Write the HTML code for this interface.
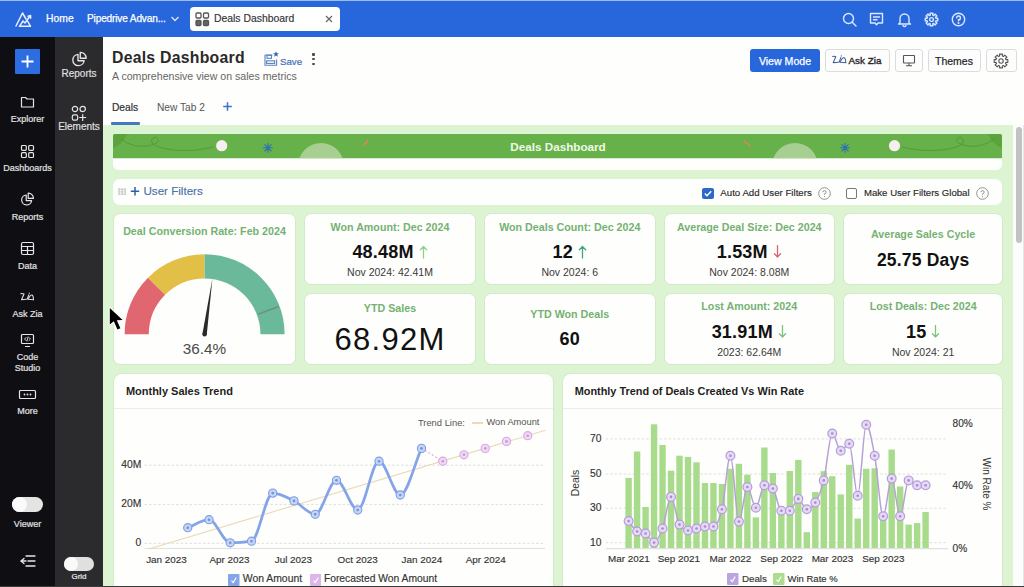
<!DOCTYPE html><html><head><meta charset="utf-8"><style>html,body{margin:0;padding:0;width:1024px;height:587px;overflow:hidden;position:relative;font-family:"Liberation Sans",sans-serif;}</style></head><body><div style="position:absolute;left:0px;top:0px;width:1024px;height:587px;background:#fefefc;"></div><div style="position:absolute;left:0px;top:0px;width:1024px;height:37px;background:#2866dc;"></div><div style="position:absolute;left:0px;top:0px;width:1024px;height:1px;background:#9dbdf2;"></div><div style="position:absolute;left:0px;top:37px;width:55px;height:550px;background:#0f0f13;"></div><div style="position:absolute;left:55px;top:37px;width:48px;height:550px;background:#2b2b2e;"></div><!--TOPBAR--><svg style="position:absolute;left:12px;top:9px;" width="22" height="20" viewBox="0 0 22 20"><g fill="none" stroke="#e8f0ff" stroke-width="1.5" stroke-linejoin="round" stroke-linecap="round"><path d="M4 17 L10.5 4 L14 10"/><path d="M7.5 17.3 L18.5 17.3 L15.5 12"/><path d="M7.5 17.3 L11 12 L13 14 L18 7"/><path d="M16 7.2 L18.6 6.6 L18.6 9.2"/></g></svg><div style="position:absolute;top:13.78px;font-size:10.3px;line-height:10.3px;color:#ffffff;font-weight:normal;white-space:nowrap;letter-spacing:0.1px;left:46px;-webkit-text-stroke:0.25px #fff;">Home</div><div style="position:absolute;top:13.95px;font-size:10.1px;line-height:10.1px;color:#ffffff;font-weight:normal;white-space:nowrap;letter-spacing:-0.15px;left:87px;-webkit-text-stroke:0.25px #fff;">Pipedrive Advan...</div><svg style="position:absolute;left:170px;top:15px;" width="10" height="8" viewBox="0 0 10 8"><path d="M1.5 2 L5 5.5 L8.5 2" fill="none" stroke="#dfe9fb" stroke-width="1.3"/></svg><div style="position:absolute;left:190px;top:7px;width:150px;height:24px;background:#ffffff;border-radius:4px;"></div><svg style="position:absolute;left:195px;top:12px;" width="15" height="15" viewBox="0 0 15 15"><g stroke="#555" stroke-width="1.3"><rect x="1" y="1" width="5" height="5" rx="1" fill="none"/><rect x="8.5" y="1" width="5" height="5" rx="1" fill="none"/><rect x="1" y="8.5" width="5" height="5" rx="1" fill="#666"/><rect x="8.5" y="8.5" width="5" height="5" rx="1" fill="#666"/></g></svg><div style="position:absolute;top:13.80px;font-size:10.4px;line-height:10.4px;color:#333;font-weight:normal;white-space:nowrap;left:214px;-webkit-text-stroke:0.15px #333;">Deals Dashboard</div><svg style="position:absolute;left:324px;top:14px;" width="10" height="10" viewBox="0 0 10 10"><path d="M2 2 L8 8 M8 2 L2 8" stroke="#666" stroke-width="1.2"/></svg><svg style="position:absolute;left:841px;top:11px;" width="17" height="17" viewBox="0 0 17 17"><g fill="none" stroke="#dce8fb" stroke-width="1.4" stroke-linecap="round" stroke-linejoin="round"><circle cx="7.5" cy="7.5" r="5"/><path d="M11.2 11.2 L15 15"/></g></svg><svg style="position:absolute;left:868px;top:11px;" width="17" height="16" viewBox="0 0 17 16"><g fill="none" stroke="#dce8fb" stroke-width="1.4" stroke-linecap="round" stroke-linejoin="round"><path d="M2.5 2.5 H14.5 V12 H10 L8.5 13.8 L7 12 H2.5 Z"/><path d="M5.5 6 H11.5 M5.5 8.8 H9"/></g></svg><svg style="position:absolute;left:896px;top:11px;" width="17" height="17" viewBox="0 0 17 17"><g fill="none" stroke="#dce8fb" stroke-width="1.4" stroke-linecap="round" stroke-linejoin="round"><path d="M4 12 V7.5 A4.5 4.5 0 0 1 13 7.5 V12 L14.5 13 H2.5 Z"/><path d="M7 14.5 A1.6 1.6 0 0 0 10 14.5"/></g></svg><svg style="position:absolute;left:923px;top:11px;" width="17" height="17" viewBox="0 0 17 17"><g fill="none" stroke="#dce8fb" stroke-width="1.4" stroke-linecap="round" stroke-linejoin="round"><path d="M7.27 4.07 L7.13 2.25 L9.87 2.25 L9.73 4.07 L10.77 4.50 L11.95 3.11 L13.89 5.05 L12.50 6.23 L12.93 7.27 L14.75 7.13 L14.75 9.87 L12.93 9.73 L12.50 10.77 L13.89 11.95 L11.95 13.89 L10.77 12.50 L9.73 12.93 L9.87 14.75 L7.13 14.75 L7.27 12.93 L6.23 12.50 L5.05 13.89 L3.11 11.95 L4.50 10.77 L4.07 9.73 L2.25 9.87 L2.25 7.13 L4.07 7.27 L4.50 6.23 L3.11 5.05 L5.05 3.11 L6.23 4.50 Z"/><circle cx="8.5" cy="8.5" r="1.9"/></g></svg><svg style="position:absolute;left:950px;top:11px;" width="17" height="17" viewBox="0 0 17 17"><g fill="none" stroke="#dce8fb" stroke-width="1.4" stroke-linecap="round" stroke-linejoin="round"><circle cx="8.5" cy="8.5" r="6.2"/><path d="M6.6 6.8 A1.9 1.9 0 1 1 8.5 8.8 V9.8" /><circle cx="8.5" cy="12" r="0.4" fill="#dce8fb"/></g></svg><div style="position:absolute;left:15px;top:49px;width:25px;height:25px;background:#2d6de2;border-radius:1px;"></div><svg style="position:absolute;left:15px;top:49px;" width="25" height="25" viewBox="0 0 25 25"><path d="M12.5 6.5 V18.5 M6.5 12.5 H18.5" stroke="#fff" stroke-width="1.8"/></svg><svg style="position:absolute;left:20px;top:95px;" width="15" height="14" viewBox="0 0 15 14"><g fill="none" stroke="#e6e6e6" stroke-width="1.2" stroke-linejoin="round" stroke-linecap="round"><path d="M1.5 2.5 H5.5 L7 4 H13.5 V12 H1.5 Z"/></g></svg><div style="position:absolute;top:115.38px;font-size:9px;line-height:9px;color:#e2e2e2;font-weight:normal;white-space:nowrap;left:-272.5px;width:600px;text-align:center;-webkit-text-stroke:0.2px #e2e2e2;">Explorer</div><svg style="position:absolute;left:20px;top:144px;" width="15" height="15" viewBox="0 0 15 15"><g fill="none" stroke="#e6e6e6" stroke-width="1.2" stroke-linejoin="round" stroke-linecap="round"><rect x="1.5" y="1.5" width="4.8" height="4.8" rx="1"/><rect x="8.7" y="1.5" width="4.8" height="4.8" rx="1"/><rect x="1.5" y="8.7" width="4.8" height="4.8" rx="1"/><rect x="8.7" y="8.7" width="4.8" height="4.8" rx="1"/></g></svg><div style="position:absolute;top:164.38px;font-size:9px;line-height:9px;color:#e2e2e2;font-weight:normal;white-space:nowrap;left:-272.5px;width:600px;text-align:center;-webkit-text-stroke:0.2px #e2e2e2;">Dashboards</div><svg style="position:absolute;left:20px;top:192px;" width="15" height="15" viewBox="0 0 15 15"><g fill="none" stroke="#e6e6e6" stroke-width="1.2" stroke-linejoin="round" stroke-linecap="round"><path d="M6.2 3 A5 5 0 1 0 11.6 8.6 H6.2 Z"/><path d="M8.2 1.2 A5 5 0 0 1 13.4 6.4 H8.2 Z"/></g></svg><div style="position:absolute;top:212.98px;font-size:9px;line-height:9px;color:#e2e2e2;font-weight:normal;white-space:nowrap;left:-272.5px;width:600px;text-align:center;-webkit-text-stroke:0.2px #e2e2e2;">Reports</div><svg style="position:absolute;left:20px;top:241px;" width="15" height="15" viewBox="0 0 15 15"><g fill="none" stroke="#e6e6e6" stroke-width="1.2" stroke-linejoin="round" stroke-linecap="round"><rect x="1.5" y="1.5" width="12" height="12" rx="1.5"/><path d="M1.5 5.5 H13.5 M1.5 9.5 H13.5 M7.5 5.5 V13.5"/></g></svg><div style="position:absolute;top:261.88px;font-size:9px;line-height:9px;color:#e2e2e2;font-weight:normal;white-space:nowrap;left:-272.5px;width:600px;text-align:center;-webkit-text-stroke:0.2px #e2e2e2;">Data</div><svg style="position:absolute;left:18px;top:291px;" width="19" height="11" viewBox="0 0 19 11"><g fill="none" stroke="#dcdcdc" stroke-width="1.15" stroke-linejoin="round" stroke-linecap="round"><path d="M3 2.6 Q5 2.4 6 3 L3.6 8.6 Q6.5 8.6 9.4 8 L10.8 3.9"/><path d="M10.2 8.2 Q12.2 3.6 13.9 4 Q15.4 4.6 15.5 8.8 Q12.8 8.6 10.2 8.2"/></g><circle cx="11.3" cy="2.2" r="0.6" fill="#dcdcdc"/></svg><div style="position:absolute;top:310.38px;font-size:9px;line-height:9px;color:#e2e2e2;font-weight:normal;white-space:nowrap;left:-272.5px;width:600px;text-align:center;-webkit-text-stroke:0.2px #e2e2e2;">Ask Zia</div><svg style="position:absolute;left:20px;top:333px;" width="15" height="15" viewBox="0 0 15 15"><g fill="none" stroke="#e6e6e6" stroke-width="1.2" stroke-linejoin="round" stroke-linecap="round"><rect x="1.5" y="1.5" width="12" height="9" rx="1"/><path d="M5.5 13.5 H9.5"/><path d="M6 4.5 L4.5 6 L6 7.5 M9 4.5 L10.5 6 L9 7.5 M8 4 L7 8" stroke-width="0.9"/></g></svg><div style="position:absolute;top:353.38px;font-size:9px;line-height:9px;color:#e2e2e2;font-weight:normal;white-space:nowrap;left:-272.5px;width:600px;text-align:center;-webkit-text-stroke:0.2px #e2e2e2;">Code</div><div style="position:absolute;top:364.38px;font-size:9px;line-height:9px;color:#e2e2e2;font-weight:normal;white-space:nowrap;left:-272.5px;width:600px;text-align:center;-webkit-text-stroke:0.2px #e2e2e2;">Studio</div><svg style="position:absolute;left:18px;top:389px;" width="19" height="11" viewBox="0 0 19 11"><g fill="none" stroke="#e6e6e6" stroke-width="1.2" stroke-linejoin="round" stroke-linecap="round"><rect x="1.5" y="1.5" width="16" height="8" rx="1"/></g><g fill="#e6e6e6"><circle cx="6.5" cy="5.5" r="0.9"/><circle cx="9.5" cy="5.5" r="0.9"/><circle cx="12.5" cy="5.5" r="0.9"/></g></svg><div style="position:absolute;top:407.38px;font-size:9px;line-height:9px;color:#e2e2e2;font-weight:normal;white-space:nowrap;left:-272.5px;width:600px;text-align:center;-webkit-text-stroke:0.2px #e2e2e2;">More</div><div style="position:absolute;left:12px;top:497px;width:31px;height:15px;background:#e4e4e2;border-radius:8px;"></div><div style="position:absolute;left:12px;top:497px;width:15px;height:15px;border-radius:50%;background:#fafafa;"></div><div style="position:absolute;top:519.88px;font-size:9px;line-height:9px;color:#e2e2e2;font-weight:normal;white-space:nowrap;left:-272.5px;width:600px;text-align:center;-webkit-text-stroke:0.2px #e2e2e2;">Viewer</div><svg style="position:absolute;left:19px;top:554px;" width="18" height="14" viewBox="0 0 18 14"><g fill="none" stroke="#e6e6e6" stroke-width="1.3" stroke-linecap="round"><path d="M7 2 H16 M9 7 H16 M7 12 H16 M5 4.5 L2 7 L5 9.5 M2 7 H7"/></g></svg><svg style="position:absolute;left:70.5px;top:50.5px;" width="17" height="17" viewBox="0 0 17 17"><g fill="none" stroke="#e6e6e6" stroke-width="1.2" stroke-linejoin="round" stroke-linecap="round" transform="scale(1.13)"><path d="M6.2 3 A5 5 0 1 0 11.6 8.6 H6.2 Z"/><path d="M8.2 1.2 A5 5 0 0 1 13.4 6.4 H8.2 Z"/></g></svg><div style="position:absolute;top:69.03px;font-size:10px;line-height:10px;color:#e2e2e2;font-weight:normal;white-space:nowrap;left:-221px;width:600px;text-align:center;-webkit-text-stroke:0.15px #e2e2e2;">Reports</div><svg style="position:absolute;left:71px;top:104.5px;" width="16" height="17" viewBox="0 0 16 17"><g fill="none" stroke="#e6e6e6" stroke-width="1.2" stroke-linejoin="round" stroke-linecap="round"><circle cx="4" cy="4" r="2.7"/><circle cx="11.7" cy="4" r="2.7"/><rect x="1.3" y="9.8" width="5.4" height="5.4" rx="1.6"/><path d="M11.7 9.5 V15.5 M8.7 12.5 H14.7"/></g></svg><div style="position:absolute;top:122.23px;font-size:10px;line-height:10px;color:#e2e2e2;font-weight:normal;white-space:nowrap;left:-221px;width:600px;text-align:center;-webkit-text-stroke:0.15px #e2e2e2;">Elements</div><div style="position:absolute;left:64px;top:557px;width:30px;height:14px;background:#e0e0de;border-radius:7px;"></div><div style="position:absolute;left:64px;top:557px;width:14px;height:14px;border-radius:50%;background:#fafafa;"></div><div style="position:absolute;top:573.23px;font-size:8px;line-height:8px;color:#e2e2e2;font-weight:normal;white-space:nowrap;left:-221px;width:600px;text-align:center;-webkit-text-stroke:0.2px #ececec;">Grid</div><div style="position:absolute;top:50.23px;font-size:15.8px;line-height:15.8px;color:#2a2a2a;font-weight:bold;white-space:nowrap;letter-spacing:0.25px;left:112px;">Deals Dashboard</div><div style="position:absolute;top:71.43px;font-size:10.6px;line-height:10.6px;color:#666;font-weight:normal;white-space:nowrap;left:112px;">A comprehensive view on sales metrics</div><svg style="position:absolute;left:262px;top:50px;" width="18" height="18" viewBox="0 0 18 18"><g fill="none" stroke="#5a82c0" stroke-width="1.1"><path d="M3 5 H10.5 M3 5 V15.3 H14.6 V9.5"/><rect x="5" y="5.3" width="4.5" height="3"/><rect x="4.6" y="10.8" width="8" height="2.6"/></g><path d="M14 1.2 L14.8 3.3 L17 3.3 L15.3 4.6 L15.9 6.8 L14 5.5 L12.1 6.8 L12.7 4.6 L11 3.3 L13.2 3.3 Z" fill="#2f62b8"/></svg><div style="position:absolute;top:56.59px;font-size:9.7px;line-height:9.7px;color:#4270b8;font-weight:normal;white-space:nowrap;left:280px;-webkit-text-stroke:0.2px #4270b8;">Save</div><div style="position:absolute;left:312.4px;top:53.4px;width:3px;height:12px;"><div style="position:absolute;left:0;top:0;width:2.2px;height:2.2px;border-radius:50%;background:#4a4a4a"></div><div style="position:absolute;left:0;top:4.6px;width:2.2px;height:2.2px;border-radius:50%;background:#4a4a4a"></div><div style="position:absolute;left:0;top:9.2px;width:2.2px;height:2.2px;border-radius:50%;background:#4a4a4a"></div></div><div style="position:absolute;top:102.87px;font-size:10.2px;line-height:10.2px;color:#333;font-weight:normal;white-space:nowrap;left:112px;-webkit-text-stroke:0.2px #333;">Deals</div><div style="position:absolute;top:102.87px;font-size:10.2px;line-height:10.2px;color:#555;font-weight:normal;white-space:nowrap;left:157px;">New Tab 2</div><svg style="position:absolute;left:221px;top:99.5px;" width="13" height="13" viewBox="0 0 13 13"><path d="M6.5 2.2 V10.8 M2.2 6.5 H10.8" stroke="#3a70c8" stroke-width="1.5"/></svg><div style="position:absolute;left:111px;top:122.3px;width:28.5px;height:2.7px;background:#4479c2;border-radius:1px;"></div><div style="position:absolute;left:750px;top:49px;width:70px;height:23px;background:#2866dc;border-radius:3px;"></div><div style="position:absolute;top:55.53px;font-size:10.6px;line-height:10.6px;color:#ffffff;font-weight:normal;white-space:nowrap;left:485px;width:600px;text-align:center;-webkit-text-stroke:0.25px #fff;">View Mode</div><div style="position:absolute;left:824.5px;top:49px;width:65px;height:23px;background:#fdfdfd;border:1px solid #dcdcdc;box-sizing:border-box;border-radius:3px;"></div><svg style="position:absolute;left:831px;top:54px;" width="17" height="12" viewBox="0 0 17 12"><g fill="none" stroke="#3d5f96" stroke-width="1.05" stroke-linejoin="round" stroke-linecap="round"><path d="M1.6 2.4 Q3.8 2.2 4.8 2.8 L2.2 8.6 Q5.3 8.6 8.3 8 L9.8 3.6"/><path d="M9.2 8.2 Q11.3 3.4 13.1 3.8 Q14.7 4.4 14.8 8.8 Q12 8.6 9.2 8.2"/></g><circle cx="10.3" cy="1.9" r="0.6" fill="#3d5f96"/></svg><div style="position:absolute;top:56.22px;font-size:9.9px;line-height:9.9px;color:#262626;font-weight:normal;white-space:nowrap;left:848.5px;-webkit-text-stroke:0.35px #262626;">Ask Zia</div><div style="position:absolute;left:894.5px;top:49px;width:28.5px;height:23px;background:#fdfdfd;border:1px solid #dcdcdc;box-sizing:border-box;border-radius:3px;"></div><svg style="position:absolute;left:902px;top:54px;" width="14" height="13" viewBox="0 0 14 13"><g fill="none" stroke="#555" stroke-width="1.1"><rect x="1.5" y="1.5" width="11" height="7.5" rx="0.5"/><path d="M7 9 V11.5 M4 11.8 H10"/></g></svg><div style="position:absolute;left:927.5px;top:49px;width:53px;height:23px;background:#fdfdfd;border:1px solid #dcdcdc;box-sizing:border-box;border-radius:3px;"></div><div style="position:absolute;top:55.71px;font-size:10.5px;line-height:10.5px;color:#222;font-weight:normal;white-space:nowrap;left:654px;width:600px;text-align:center;-webkit-text-stroke:0.2px #222;">Themes</div><div style="position:absolute;left:985.5px;top:49px;width:31px;height:23px;background:#fdfdfd;border:1px solid #dcdcdc;box-sizing:border-box;border-radius:3px;"></div><svg style="position:absolute;left:992px;top:52px;" width="18" height="18" viewBox="0 0 18 18"><g fill="none" stroke="#555" stroke-width="1.1" stroke-linejoin="round"><path d="M7.64 4.08 L7.50 2.16 L10.50 2.16 L10.36 4.08 L11.51 4.56 L12.77 3.10 L14.90 5.23 L13.44 6.49 L13.92 7.64 L15.84 7.50 L15.84 10.50 L13.92 10.36 L13.44 11.51 L14.90 12.77 L12.77 14.90 L11.51 13.44 L10.36 13.92 L10.50 15.84 L7.50 15.84 L7.64 13.92 L6.49 13.44 L5.23 14.90 L3.10 12.77 L4.56 11.51 L4.08 10.36 L2.16 10.50 L2.16 7.50 L4.08 7.64 L4.56 6.49 L3.10 5.23 L5.23 3.10 L6.49 4.56 Z"/><circle cx="9" cy="9" r="2.2"/></g></svg><div style="position:absolute;left:103px;top:125px;width:910px;height:462px;background:#ddf4d3;"></div><div style="position:absolute;left:1013px;top:125px;width:11px;height:462px;background:#fcfcfd;"></div><div style="position:absolute;left:1023px;top:125px;width:1px;height:462px;background:#e6e6ea;"></div><div style="position:absolute;left:1015.5px;top:127px;width:6px;height:115.5px;background:#c2c2c2;border-radius:3px;"></div><div style="position:absolute;left:113px;top:133.5px;width:889px;height:36px;background:#fefefc;border-radius:2px 2px 6px 6px;"></div><svg style="position:absolute;left:113px;top:133.5px;border-radius:2px 2px 6px 6px;" width="889" height="36" viewBox="0 0 889 36"><rect x="0" y="0" width="889" height="24.5" fill="#66b149"/><path d="M0 0 H14 Q10 10 0 14 Z" fill="#5aa03f" opacity="0.8"/><path d="M889 0 H875 Q879 10 889 14 Z" fill="#5aa03f" opacity="0.8"/><path d="M8 5 Q20 14 34 12 Q47 10 45 5 Q42 1 38.5 6 Q37 13 60 16 Q80 18 100 13" fill="none" stroke="#4f9639" stroke-width="0.8"/><path d="M881 5 Q869 14 855 12 Q842 10 844 5 Q847 1 850.5 6 Q852 13 829 16 Q809 18 789 13" fill="none" stroke="#4f9639" stroke-width="0.8"/><circle cx="208" cy="32" r="23" fill="#a6cf91"/><circle cx="682" cy="32" r="23" fill="#a6cf91"/><circle cx="108.7" cy="11.7" r="5.6" fill="#f7eef0"/><circle cx="781.5" cy="11.7" r="5.6" fill="#f7eef0"/><g stroke="#2f74b0" stroke-width="1.1" stroke-linecap="round"><path d="M154.9 9.3 V18.3 M150.4 13.8 H159.4 M151.7 10.6 L158.1 17 M158.1 10.6 L151.7 17"/><path d="M732 9.3 V18.3 M727.5 13.8 H736.5 M728.8 10.6 L735.2 17 M735.2 10.6 L728.8 17"/></g><circle cx="154.9" cy="13.8" r="1.8" fill="#2f74b0"/><circle cx="732" cy="13.8" r="1.8" fill="#2f74b0"/><path d="M250 12 Q253 10 254 8 M251 11 L255 6" stroke="#d88a4a" stroke-width="1.4" fill="none" stroke-linecap="round"/><path d="M631 7 Q634 9 637 12 M632 8 L636 11" stroke="#d88a4a" stroke-width="1.4" fill="none" stroke-linecap="round"/><rect x="0" y="24.5" width="889" height="12" fill="#fefefc"/></svg><div style="position:absolute;top:141.30px;font-size:11.7px;line-height:11.7px;color:#eef9e6;font-weight:bold;white-space:nowrap;left:258px;width:600px;text-align:center;">Deals Dashboard</div><div style="position:absolute;left:113px;top:179px;width:889px;height:26px;background:#fefefc;border-radius:7px;"></div><svg style="position:absolute;left:118px;top:187px;" width="9" height="9" viewBox="0 0 9 9"><g fill="#c8c8c8"><rect x="0.5" y="1" width="1.2" height="7"/><rect x="3.5" y="1" width="1.2" height="7"/><rect x="6.5" y="1" width="1.2" height="7"/><rect x="0" y="2.2" width="8" height="0.8"/><rect x="0" y="4.5" width="8" height="0.8"/><rect x="0" y="6.8" width="8" height="0.8"/></g></svg><svg style="position:absolute;left:130px;top:186px;" width="10" height="10" viewBox="0 0 10 10"><path d="M5 1 V9.5 M0.8 5.2 H9.2" stroke="#2f5ea8" stroke-width="1.5"/></svg><div style="position:absolute;top:185.18px;font-size:11.6px;line-height:11.6px;color:#4a72ab;font-weight:normal;white-space:nowrap;left:143.5px;-webkit-text-stroke:0.15px #4a72ab;">User Filters</div><div style="position:absolute;left:702px;top:187.5px;width:11.5px;height:11px;background:#2f68c8;border-radius:2px;"></div><svg style="position:absolute;left:702px;top:187.5px;" width="12" height="11" viewBox="0 0 12 11"><path d="M2.8 5.6 L5 7.8 L9.2 3.2" stroke="#fff" stroke-width="1.4" fill="none"/></svg><div style="position:absolute;top:188.09px;font-size:9.7px;line-height:9.7px;color:#2a2a2a;font-weight:normal;white-space:nowrap;left:720.3px;-webkit-text-stroke:0.15px #2a2a2a;">Auto Add User Filters</div><svg style="position:absolute;left:818px;top:186.5px;" width="13" height="13" viewBox="0 0 13 13"><g fill="none" stroke="#888" stroke-width="0.9"><circle cx="6.5" cy="6.5" r="5.8"/><path d="M4.9 5.2 A1.6 1.6 0 1 1 6.5 6.8 V7.8"/></g><circle cx="6.5" cy="9.6" r="0.55" fill="#888"/></svg><div style="position:absolute;left:845.5px;top:187.5px;width:11.5px;height:11px;background:#ffffff;border:1px solid #777;box-sizing:border-box;border-radius:2px;"></div><div style="position:absolute;top:188.17px;font-size:9.6px;line-height:9.6px;color:#2a2a2a;font-weight:normal;white-space:nowrap;left:864px;-webkit-text-stroke:0.15px #2a2a2a;">Make User Filters Global</div><svg style="position:absolute;left:975.5px;top:186.5px;" width="13" height="13" viewBox="0 0 13 13"><g fill="none" stroke="#888" stroke-width="0.9"><circle cx="6.5" cy="6.5" r="5.8"/><path d="M4.9 5.2 A1.6 1.6 0 1 1 6.5 6.8 V7.8"/></g><circle cx="6.5" cy="9.6" r="0.55" fill="#888"/></svg><div style="position:absolute;left:114px;top:214px;width:181px;height:150px;background:#fefefc;border-radius:6px;box-shadow:0 0 0 1px #d3eaca;"></div><div style="position:absolute;left:305px;top:214px;width:170px;height:70px;background:#fefefc;border-radius:6px;box-shadow:0 0 0 1px #d3eaca;"></div><div style="position:absolute;left:305px;top:294px;width:170px;height:70px;background:#fefefc;border-radius:6px;box-shadow:0 0 0 1px #d3eaca;"></div><div style="position:absolute;left:485px;top:214px;width:169.5px;height:70px;background:#fefefc;border-radius:6px;box-shadow:0 0 0 1px #d3eaca;"></div><div style="position:absolute;left:485px;top:294px;width:169.5px;height:70px;background:#fefefc;border-radius:6px;box-shadow:0 0 0 1px #d3eaca;"></div><div style="position:absolute;left:664.5px;top:214px;width:169.5px;height:70px;background:#fefefc;border-radius:6px;box-shadow:0 0 0 1px #d3eaca;"></div><div style="position:absolute;left:664.5px;top:294px;width:169.5px;height:70px;background:#fefefc;border-radius:6px;box-shadow:0 0 0 1px #d3eaca;"></div><div style="position:absolute;left:844px;top:214px;width:158.29999999999995px;height:70px;background:#fefefc;border-radius:6px;box-shadow:0 0 0 1px #d3eaca;"></div><div style="position:absolute;left:844px;top:294px;width:158.29999999999995px;height:70px;background:#fefefc;border-radius:6px;box-shadow:0 0 0 1px #d3eaca;"></div><div style="position:absolute;top:221.94px;font-size:10.7px;line-height:10.7px;color:#74b273;font-weight:bold;white-space:nowrap;left:90.0px;width:600px;text-align:center;">Won Amount: Dec 2024</div><div style="position:absolute;left:90.0px;width:600px;top:243.06px;text-align:center;font-size:18px;line-height:18px;font-weight:bold;color:#111;white-space:nowrap;letter-spacing:0.2px;">48.48M<svg width="9" height="14" viewBox="0 0 9 14" style="margin-left:5px;vertical-align:-1px"><path d="M4.5 1.5 V13 M1.4 4.8 L4.5 1.5 L7.6 4.8" fill="none" stroke="#8fcf8f" stroke-width="1.3" stroke-linecap="round" stroke-linejoin="round"/></svg></div><div style="position:absolute;top:267.11px;font-size:10.5px;line-height:10.5px;color:#3a3a3a;font-weight:normal;white-space:nowrap;left:90.0px;width:600px;text-align:center;">Nov 2024: 42.41M</div><div style="position:absolute;top:221.94px;font-size:10.7px;line-height:10.7px;color:#74b273;font-weight:bold;white-space:nowrap;left:269.75px;width:600px;text-align:center;">Won Deals Count: Dec 2024</div><div style="position:absolute;left:269.75px;width:600px;top:243.06px;text-align:center;font-size:18px;line-height:18px;font-weight:bold;color:#111;white-space:nowrap;letter-spacing:0.2px;">12<svg width="9" height="14" viewBox="0 0 9 14" style="margin-left:5px;vertical-align:-1px"><path d="M4.5 1.5 V13 M1.4 4.8 L4.5 1.5 L7.6 4.8" fill="none" stroke="#3fa68c" stroke-width="1.3" stroke-linecap="round" stroke-linejoin="round"/></svg></div><div style="position:absolute;top:267.11px;font-size:10.5px;line-height:10.5px;color:#3a3a3a;font-weight:normal;white-space:nowrap;left:269.75px;width:600px;text-align:center;">Nov 2024: 6</div><div style="position:absolute;top:221.94px;font-size:10.7px;line-height:10.7px;color:#74b273;font-weight:bold;white-space:nowrap;left:449.25px;width:600px;text-align:center;">Average Deal Size: Dec 2024</div><div style="position:absolute;left:449.25px;width:600px;top:243.06px;text-align:center;font-size:18px;line-height:18px;font-weight:bold;color:#111;white-space:nowrap;letter-spacing:0.2px;">1.53M<svg width="9" height="14" viewBox="0 0 9 14" style="margin-left:5px;vertical-align:-1px"><path d="M4.5 0.5 V12 M1.4 8.7 L4.5 12 L7.6 8.7" fill="none" stroke="#d4687a" stroke-width="1.3" stroke-linecap="round" stroke-linejoin="round"/></svg></div><div style="position:absolute;top:267.11px;font-size:10.5px;line-height:10.5px;color:#3a3a3a;font-weight:normal;white-space:nowrap;left:449.25px;width:600px;text-align:center;">Nov 2024: 8.08M</div><div style="position:absolute;top:229.44px;font-size:10.7px;line-height:10.7px;color:#74b273;font-weight:bold;white-space:nowrap;left:623.15px;width:600px;text-align:center;">Average Sales Cycle</div><div style="position:absolute;top:251.99px;font-size:17.5px;line-height:17.5px;color:#111;font-weight:bold;white-space:nowrap;letter-spacing:0.2px;left:623.15px;width:600px;text-align:center;">25.75 Days</div><div style="position:absolute;top:302.54px;font-size:10.7px;line-height:10.7px;color:#74b273;font-weight:bold;white-space:nowrap;left:90.0px;width:600px;text-align:center;">YTD Sales</div><div style="position:absolute;top:323.76px;font-size:31px;line-height:31px;color:#111;font-weight:normal;white-space:nowrap;letter-spacing:1.3px;left:90.0px;width:600px;text-align:center;">68.92M</div><div style="position:absolute;top:308.94px;font-size:10.7px;line-height:10.7px;color:#74b273;font-weight:bold;white-space:nowrap;left:269.75px;width:600px;text-align:center;">YTD Won Deals</div><div style="position:absolute;top:330.36px;font-size:18px;line-height:18px;color:#111;font-weight:bold;white-space:nowrap;letter-spacing:0.2px;left:269.75px;width:600px;text-align:center;">60</div><div style="position:absolute;top:301.44px;font-size:10.7px;line-height:10.7px;color:#74b273;font-weight:bold;white-space:nowrap;left:449.25px;width:600px;text-align:center;">Lost Amount: 2024</div><div style="position:absolute;left:449.25px;width:600px;top:323.06px;text-align:center;font-size:18px;line-height:18px;font-weight:bold;color:#111;white-space:nowrap;letter-spacing:0.2px;">31.91M<svg width="9" height="14" viewBox="0 0 9 14" style="margin-left:5px;vertical-align:-1px"><path d="M4.5 0.5 V12 M1.4 8.7 L4.5 12 L7.6 8.7" fill="none" stroke="#7fc27f" stroke-width="1.3" stroke-linecap="round" stroke-linejoin="round"/></svg></div><div style="position:absolute;top:347.11px;font-size:10.5px;line-height:10.5px;color:#3a3a3a;font-weight:normal;white-space:nowrap;left:449.25px;width:600px;text-align:center;">2023: 62.64M</div><div style="position:absolute;top:301.44px;font-size:10.7px;line-height:10.7px;color:#74b273;font-weight:bold;white-space:nowrap;left:623.15px;width:600px;text-align:center;">Lost Deals: Dec 2024</div><div style="position:absolute;left:623.15px;width:600px;top:323.06px;text-align:center;font-size:18px;line-height:18px;font-weight:bold;color:#111;white-space:nowrap;letter-spacing:0.2px;">15<svg width="9" height="14" viewBox="0 0 9 14" style="margin-left:5px;vertical-align:-1px"><path d="M4.5 0.5 V12 M1.4 8.7 L4.5 12 L7.6 8.7" fill="none" stroke="#7fc27f" stroke-width="1.3" stroke-linecap="round" stroke-linejoin="round"/></svg></div><div style="position:absolute;top:347.11px;font-size:10.5px;line-height:10.5px;color:#3a3a3a;font-weight:normal;white-space:nowrap;left:623.15px;width:600px;text-align:center;">Nov 2024: 21</div><div style="position:absolute;top:225.84px;font-size:10.7px;line-height:10.7px;color:#74b273;font-weight:bold;white-space:nowrap;left:-95.5px;width:600px;text-align:center;">Deal Conversion Rate: Feb 2024</div><svg style="position:absolute;left:0;top:0" width="1024" height="587" viewBox="0 0 1024 587"><path d="M124.60 334.20 A80 80 0 0 1 148.03 277.63 L165.14 294.74 A55.8 55.8 0 0 0 148.80 334.20 Z" fill="#e0666f"/><path d="M148.03 277.63 A80 80 0 0 1 204.60 254.20 L204.60 278.40 A55.8 55.8 0 0 0 165.14 294.74 Z" fill="#e2bf47"/><path d="M204.60 254.20 A80 80 0 0 1 284.60 334.20 L260.40 334.20 A55.8 55.8 0 0 0 204.60 278.40 Z" fill="#6ab99a"/><path d="M257.80 314.31 L278.60 306.53" stroke="#6f8d7f" stroke-width="1.4"/><path d="M202.42 333.89 L212.46 278.25 L206.78 334.51 Z" fill="#2b2b2b"/><circle cx="204.6" cy="334.2" r="2.2" fill="#2b2b2b"/></svg><div style="position:absolute;top:340.85px;font-size:15.3px;line-height:15.3px;color:#4a4a4a;font-weight:normal;white-space:nowrap;left:-95.5px;width:600px;text-align:center;">36.4%</div><div style="position:absolute;left:113.8px;top:374.2px;width:439.09999999999997px;height:225.8px;background:#fefefc;border-radius:8px;box-shadow:0 0 0 1px #d3eaca;"></div><div style="position:absolute;left:562.8px;top:374.2px;width:439.20000000000005px;height:225.8px;background:#fefefc;border-radius:8px;box-shadow:0 0 0 1px #d3eaca;"></div><div style="position:absolute;left:113.8px;top:407.5px;width:438.9px;height:1px;background:#ececea;"></div><div style="position:absolute;left:562.8px;top:407.5px;width:439.2px;height:1px;background:#ececea;"></div><div style="position:absolute;top:385.79px;font-size:11px;line-height:11px;color:#1e1e1e;font-weight:bold;white-space:nowrap;left:125.9px;">Monthly Sales Trend</div><div style="position:absolute;top:386.07px;font-size:10.9px;line-height:10.9px;color:#1e1e1e;font-weight:bold;white-space:nowrap;left:574.7px;">Monthly Trend of Deals Created Vs Win Rate</div><svg style="position:absolute;left:0;top:0" width="1024" height="587" viewBox="0 0 1024 587"><path d="M144.6 465.2 H545" stroke="#dedede" stroke-width="1" stroke-dasharray="2.5 2"/><path d="M144.6 504.4 H545" stroke="#dedede" stroke-width="1" stroke-dasharray="2.5 2"/><path d="M144.6 543.3 H545" stroke="#dedede" stroke-width="1" stroke-dasharray="2.5 2"/><path d="M144.6 548.5 H545" stroke="#e0e0e0" stroke-width="1.2"/><path d="M148.8 549 L545.4 430.3" stroke="#ead9b6" stroke-width="1.1"/><path d="M472 423 H483" stroke="#e2c892" stroke-width="1.3"/><path d="M421.5 448.4 L442.75 461.2" stroke="#dcb3e6" stroke-width="1.2" stroke-dasharray="2 2"/><path d="M187.75 527.70 C194.83 525.03 201.92 519.70 209.00 519.70 C216.08 519.70 223.17 542.80 230.25 542.80 C237.33 542.80 244.42 542.27 251.50 541.20 C258.58 540.13 265.67 493.10 272.75 493.10 C279.83 493.10 286.92 497.37 294.00 500.90 C301.08 504.43 308.17 514.30 315.25 514.30 C322.33 514.30 329.42 480.30 336.50 480.30 C343.58 480.30 350.67 510.00 357.75 510.00 C364.83 510.00 371.92 461.20 379.00 461.20 C386.08 461.20 393.17 495.00 400.25 495.00 C407.33 495.00 414.42 463.93 421.50 448.40" fill="none" stroke="#85a3e9" stroke-width="2.7"/><circle cx="187.75" cy="527.7" r="4.1" fill="#c7d5f5" stroke="#7d9ee6" stroke-width="1.1"/><circle cx="187.75" cy="527.7" r="1.3" fill="#6f90dd"/><circle cx="209.0" cy="519.7" r="4.1" fill="#c7d5f5" stroke="#7d9ee6" stroke-width="1.1"/><circle cx="209.0" cy="519.7" r="1.3" fill="#6f90dd"/><circle cx="230.25" cy="542.8" r="4.1" fill="#c7d5f5" stroke="#7d9ee6" stroke-width="1.1"/><circle cx="230.25" cy="542.8" r="1.3" fill="#6f90dd"/><circle cx="251.5" cy="541.2" r="4.1" fill="#c7d5f5" stroke="#7d9ee6" stroke-width="1.1"/><circle cx="251.5" cy="541.2" r="1.3" fill="#6f90dd"/><circle cx="272.75" cy="493.1" r="4.1" fill="#c7d5f5" stroke="#7d9ee6" stroke-width="1.1"/><circle cx="272.75" cy="493.1" r="1.3" fill="#6f90dd"/><circle cx="294.0" cy="500.9" r="4.1" fill="#c7d5f5" stroke="#7d9ee6" stroke-width="1.1"/><circle cx="294.0" cy="500.9" r="1.3" fill="#6f90dd"/><circle cx="315.25" cy="514.3" r="4.1" fill="#c7d5f5" stroke="#7d9ee6" stroke-width="1.1"/><circle cx="315.25" cy="514.3" r="1.3" fill="#6f90dd"/><circle cx="336.5" cy="480.3" r="4.1" fill="#c7d5f5" stroke="#7d9ee6" stroke-width="1.1"/><circle cx="336.5" cy="480.3" r="1.3" fill="#6f90dd"/><circle cx="357.75" cy="510" r="4.1" fill="#c7d5f5" stroke="#7d9ee6" stroke-width="1.1"/><circle cx="357.75" cy="510" r="1.3" fill="#6f90dd"/><circle cx="379.0" cy="461.2" r="4.1" fill="#c7d5f5" stroke="#7d9ee6" stroke-width="1.1"/><circle cx="379.0" cy="461.2" r="1.3" fill="#6f90dd"/><circle cx="400.25" cy="495" r="4.1" fill="#c7d5f5" stroke="#7d9ee6" stroke-width="1.1"/><circle cx="400.25" cy="495" r="1.3" fill="#6f90dd"/><circle cx="421.5" cy="448.4" r="4.1" fill="#c7d5f5" stroke="#7d9ee6" stroke-width="1.1"/><circle cx="421.5" cy="448.4" r="1.3" fill="#6f90dd"/><circle cx="442.75" cy="461.2" r="4.1" fill="#efd9f3" stroke="#d8a9e4" stroke-width="1.1"/><circle cx="442.75" cy="461.2" r="1.3" fill="#cf94de"/><circle cx="464.0" cy="454.8" r="4.1" fill="#efd9f3" stroke="#d8a9e4" stroke-width="1.1"/><circle cx="464.0" cy="454.8" r="1.3" fill="#cf94de"/><circle cx="485.25" cy="448.4" r="4.1" fill="#efd9f3" stroke="#d8a9e4" stroke-width="1.1"/><circle cx="485.25" cy="448.4" r="1.3" fill="#cf94de"/><circle cx="506.5" cy="441.4" r="4.1" fill="#efd9f3" stroke="#d8a9e4" stroke-width="1.1"/><circle cx="506.5" cy="441.4" r="1.3" fill="#cf94de"/><circle cx="527.75" cy="435.7" r="4.1" fill="#efd9f3" stroke="#d8a9e4" stroke-width="1.1"/><circle cx="527.75" cy="435.7" r="1.3" fill="#cf94de"/><path d="M605.7 438.9 H946.2" stroke="#dedede" stroke-width="1" stroke-dasharray="2.5 2"/><path d="M605.7 474 H946.2" stroke="#dedede" stroke-width="1" stroke-dasharray="2.5 2"/><path d="M605.7 508.3 H946.2" stroke="#dedede" stroke-width="1" stroke-dasharray="2.5 2"/><path d="M605.7 542.7 H946.2" stroke="#dedede" stroke-width="1" stroke-dasharray="2.5 2"/><rect x="625.40" y="477.9" width="6.4" height="70.40" fill="#a9db8c"/><rect x="633.89" y="451.5" width="6.4" height="96.80" fill="#a9db8c"/><rect x="642.37" y="507" width="6.4" height="41.30" fill="#a9db8c"/><rect x="650.86" y="424.3" width="6.4" height="124.00" fill="#a9db8c"/><rect x="659.34" y="445" width="6.4" height="103.30" fill="#a9db8c"/><rect x="667.83" y="470.7" width="6.4" height="77.60" fill="#a9db8c"/><rect x="676.32" y="455.7" width="6.4" height="92.60" fill="#a9db8c"/><rect x="684.80" y="456.9" width="6.4" height="91.40" fill="#a9db8c"/><rect x="693.29" y="462.3" width="6.4" height="86.00" fill="#a9db8c"/><rect x="701.77" y="483" width="6.4" height="65.30" fill="#a9db8c"/><rect x="710.26" y="483" width="6.4" height="65.30" fill="#a9db8c"/><rect x="718.75" y="484" width="6.4" height="64.30" fill="#a9db8c"/><rect x="727.23" y="468.8" width="6.4" height="79.50" fill="#a9db8c"/><rect x="735.72" y="463.8" width="6.4" height="84.50" fill="#a9db8c"/><rect x="744.20" y="474.7" width="6.4" height="73.60" fill="#a9db8c"/><rect x="752.69" y="517.4" width="6.4" height="30.90" fill="#a9db8c"/><rect x="761.18" y="447.5" width="6.4" height="100.80" fill="#a9db8c"/><rect x="769.66" y="473" width="6.4" height="75.30" fill="#a9db8c"/><rect x="778.15" y="508" width="6.4" height="40.30" fill="#a9db8c"/><rect x="786.63" y="471" width="6.4" height="77.30" fill="#a9db8c"/><rect x="795.12" y="459.9" width="6.4" height="88.40" fill="#a9db8c"/><rect x="803.61" y="532.2" width="6.4" height="16.10" fill="#a9db8c"/><rect x="812.09" y="492" width="6.4" height="56.30" fill="#a9db8c"/><rect x="820.58" y="471.2" width="6.4" height="77.10" fill="#a9db8c"/><rect x="829.06" y="476.2" width="6.4" height="72.10" fill="#a9db8c"/><rect x="837.55" y="494.4" width="6.4" height="53.90" fill="#a9db8c"/><rect x="846.04" y="464.8" width="6.4" height="83.50" fill="#a9db8c"/><rect x="854.52" y="518.6" width="6.4" height="29.70" fill="#a9db8c"/><rect x="863.01" y="468.8" width="6.4" height="79.50" fill="#a9db8c"/><rect x="871.49" y="468.3" width="6.4" height="80.00" fill="#a9db8c"/><rect x="879.98" y="515" width="6.4" height="33.30" fill="#a9db8c"/><rect x="888.47" y="449.5" width="6.4" height="98.80" fill="#a9db8c"/><rect x="896.95" y="486.5" width="6.4" height="61.80" fill="#a9db8c"/><rect x="905.44" y="524.6" width="6.4" height="23.70" fill="#a9db8c"/><rect x="913.92" y="523.1" width="6.4" height="25.20" fill="#a9db8c"/><rect x="922.41" y="512" width="6.4" height="36.30" fill="#a9db8c"/><path d="M605.7 548.6 H948" stroke="#e0e0e0" stroke-width="1.2"/><path d="M628.60 521.10 C631.43 524.57 634.26 530.17 637.09 531.50 C639.91 532.83 642.74 532.17 645.57 533.50 C648.40 534.83 651.23 542.60 654.06 542.60 C656.89 542.60 659.72 536.12 662.54 528.50 C665.37 520.88 668.20 496.90 671.03 496.90 C673.86 496.90 676.69 520.67 679.52 524.60 C682.34 528.53 685.17 530.50 688.00 530.50 C690.83 530.50 693.66 529.17 696.49 528.50 C699.32 527.83 702.15 526.50 704.97 526.50 C707.80 526.50 710.63 526.50 713.46 526.50 C716.29 526.50 719.12 520.77 721.95 509.30 C724.77 497.83 727.60 455.70 730.43 455.70 C733.26 455.70 736.09 521.60 738.92 521.60 C741.75 521.60 744.58 487.00 747.40 487.00 C750.23 487.00 753.06 507.80 755.89 507.80 C758.72 507.80 761.55 485.30 764.38 485.30 C767.20 485.30 770.03 486.37 772.86 488.50 C775.69 490.63 778.52 510.70 781.35 510.70 C784.18 510.70 787.01 510.70 789.83 510.70 C792.66 510.70 795.49 498.90 798.32 498.90 C801.15 498.90 803.98 509.30 806.81 509.30 C809.63 509.30 812.46 507.07 815.29 502.60 C818.12 498.13 820.95 491.92 823.78 480.40 C826.61 468.88 829.44 433.50 832.26 433.50 C835.09 433.50 837.92 450.70 840.75 450.70 C843.58 450.70 846.41 443.80 849.24 443.80 C852.06 443.80 854.89 495.70 857.72 495.70 C860.55 495.70 863.38 424.80 866.21 424.80 C869.04 424.80 871.87 440.47 874.69 455.70 C877.52 470.93 880.35 516.20 883.18 516.20 C886.01 516.20 888.84 478.60 891.67 478.60 C894.49 478.60 897.32 516.20 900.15 516.20 C902.98 516.20 905.81 480.40 908.64 480.40 C911.47 480.40 914.30 485.30 917.12 485.30 C919.95 485.30 922.78 485.30 925.61 485.30" fill="none" stroke="#b7a0da" stroke-width="1.5"/><circle cx="628.60" cy="521.1" r="4.4" fill="#e6d9f3" stroke="#b59cdb" stroke-width="1.2"/><circle cx="628.60" cy="521.1" r="1.3" fill="#a98bd4"/><circle cx="637.09" cy="531.5" r="4.4" fill="#e6d9f3" stroke="#b59cdb" stroke-width="1.2"/><circle cx="637.09" cy="531.5" r="1.3" fill="#a98bd4"/><circle cx="645.57" cy="533.5" r="4.4" fill="#e6d9f3" stroke="#b59cdb" stroke-width="1.2"/><circle cx="645.57" cy="533.5" r="1.3" fill="#a98bd4"/><circle cx="654.06" cy="542.6" r="4.4" fill="#e6d9f3" stroke="#b59cdb" stroke-width="1.2"/><circle cx="654.06" cy="542.6" r="1.3" fill="#a98bd4"/><circle cx="662.54" cy="528.5" r="4.4" fill="#e6d9f3" stroke="#b59cdb" stroke-width="1.2"/><circle cx="662.54" cy="528.5" r="1.3" fill="#a98bd4"/><circle cx="671.03" cy="496.9" r="4.4" fill="#e6d9f3" stroke="#b59cdb" stroke-width="1.2"/><circle cx="671.03" cy="496.9" r="1.3" fill="#a98bd4"/><circle cx="679.52" cy="524.6" r="4.4" fill="#e6d9f3" stroke="#b59cdb" stroke-width="1.2"/><circle cx="679.52" cy="524.6" r="1.3" fill="#a98bd4"/><circle cx="688.00" cy="530.5" r="4.4" fill="#e6d9f3" stroke="#b59cdb" stroke-width="1.2"/><circle cx="688.00" cy="530.5" r="1.3" fill="#a98bd4"/><circle cx="696.49" cy="528.5" r="4.4" fill="#e6d9f3" stroke="#b59cdb" stroke-width="1.2"/><circle cx="696.49" cy="528.5" r="1.3" fill="#a98bd4"/><circle cx="704.97" cy="526.5" r="4.4" fill="#e6d9f3" stroke="#b59cdb" stroke-width="1.2"/><circle cx="704.97" cy="526.5" r="1.3" fill="#a98bd4"/><circle cx="713.46" cy="526.5" r="4.4" fill="#e6d9f3" stroke="#b59cdb" stroke-width="1.2"/><circle cx="713.46" cy="526.5" r="1.3" fill="#a98bd4"/><circle cx="721.95" cy="509.3" r="4.4" fill="#e6d9f3" stroke="#b59cdb" stroke-width="1.2"/><circle cx="721.95" cy="509.3" r="1.3" fill="#a98bd4"/><circle cx="730.43" cy="455.7" r="4.4" fill="#e6d9f3" stroke="#b59cdb" stroke-width="1.2"/><circle cx="730.43" cy="455.7" r="1.3" fill="#a98bd4"/><circle cx="738.92" cy="521.6" r="4.4" fill="#e6d9f3" stroke="#b59cdb" stroke-width="1.2"/><circle cx="738.92" cy="521.6" r="1.3" fill="#a98bd4"/><circle cx="747.40" cy="487" r="4.4" fill="#e6d9f3" stroke="#b59cdb" stroke-width="1.2"/><circle cx="747.40" cy="487" r="1.3" fill="#a98bd4"/><circle cx="755.89" cy="507.8" r="4.4" fill="#e6d9f3" stroke="#b59cdb" stroke-width="1.2"/><circle cx="755.89" cy="507.8" r="1.3" fill="#a98bd4"/><circle cx="764.38" cy="485.3" r="4.4" fill="#e6d9f3" stroke="#b59cdb" stroke-width="1.2"/><circle cx="764.38" cy="485.3" r="1.3" fill="#a98bd4"/><circle cx="772.86" cy="488.5" r="4.4" fill="#e6d9f3" stroke="#b59cdb" stroke-width="1.2"/><circle cx="772.86" cy="488.5" r="1.3" fill="#a98bd4"/><circle cx="781.35" cy="510.7" r="4.4" fill="#e6d9f3" stroke="#b59cdb" stroke-width="1.2"/><circle cx="781.35" cy="510.7" r="1.3" fill="#a98bd4"/><circle cx="789.83" cy="510.7" r="4.4" fill="#e6d9f3" stroke="#b59cdb" stroke-width="1.2"/><circle cx="789.83" cy="510.7" r="1.3" fill="#a98bd4"/><circle cx="798.32" cy="498.9" r="4.4" fill="#e6d9f3" stroke="#b59cdb" stroke-width="1.2"/><circle cx="798.32" cy="498.9" r="1.3" fill="#a98bd4"/><circle cx="806.81" cy="509.3" r="4.4" fill="#e6d9f3" stroke="#b59cdb" stroke-width="1.2"/><circle cx="806.81" cy="509.3" r="1.3" fill="#a98bd4"/><circle cx="815.29" cy="502.6" r="4.4" fill="#e6d9f3" stroke="#b59cdb" stroke-width="1.2"/><circle cx="815.29" cy="502.6" r="1.3" fill="#a98bd4"/><circle cx="823.78" cy="480.4" r="4.4" fill="#e6d9f3" stroke="#b59cdb" stroke-width="1.2"/><circle cx="823.78" cy="480.4" r="1.3" fill="#a98bd4"/><circle cx="832.26" cy="433.5" r="4.4" fill="#e6d9f3" stroke="#b59cdb" stroke-width="1.2"/><circle cx="832.26" cy="433.5" r="1.3" fill="#a98bd4"/><circle cx="840.75" cy="450.7" r="4.4" fill="#e6d9f3" stroke="#b59cdb" stroke-width="1.2"/><circle cx="840.75" cy="450.7" r="1.3" fill="#a98bd4"/><circle cx="849.24" cy="443.8" r="4.4" fill="#e6d9f3" stroke="#b59cdb" stroke-width="1.2"/><circle cx="849.24" cy="443.8" r="1.3" fill="#a98bd4"/><circle cx="857.72" cy="495.7" r="4.4" fill="#e6d9f3" stroke="#b59cdb" stroke-width="1.2"/><circle cx="857.72" cy="495.7" r="1.3" fill="#a98bd4"/><circle cx="866.21" cy="424.8" r="4.4" fill="#e6d9f3" stroke="#b59cdb" stroke-width="1.2"/><circle cx="866.21" cy="424.8" r="1.3" fill="#a98bd4"/><circle cx="874.69" cy="455.7" r="4.4" fill="#e6d9f3" stroke="#b59cdb" stroke-width="1.2"/><circle cx="874.69" cy="455.7" r="1.3" fill="#a98bd4"/><circle cx="883.18" cy="516.2" r="4.4" fill="#e6d9f3" stroke="#b59cdb" stroke-width="1.2"/><circle cx="883.18" cy="516.2" r="1.3" fill="#a98bd4"/><circle cx="891.67" cy="478.6" r="4.4" fill="#e6d9f3" stroke="#b59cdb" stroke-width="1.2"/><circle cx="891.67" cy="478.6" r="1.3" fill="#a98bd4"/><circle cx="900.15" cy="516.2" r="4.4" fill="#e6d9f3" stroke="#b59cdb" stroke-width="1.2"/><circle cx="900.15" cy="516.2" r="1.3" fill="#a98bd4"/><circle cx="908.64" cy="480.4" r="4.4" fill="#e6d9f3" stroke="#b59cdb" stroke-width="1.2"/><circle cx="908.64" cy="480.4" r="1.3" fill="#a98bd4"/><circle cx="917.12" cy="485.3" r="4.4" fill="#e6d9f3" stroke="#b59cdb" stroke-width="1.2"/><circle cx="917.12" cy="485.3" r="1.3" fill="#a98bd4"/><circle cx="925.61" cy="485.3" r="4.4" fill="#e6d9f3" stroke="#b59cdb" stroke-width="1.2"/><circle cx="925.61" cy="485.3" r="1.3" fill="#a98bd4"/></svg><div style="position:absolute;top:460.08px;font-size:10.3px;line-height:10.3px;color:#333;font-weight:normal;white-space:nowrap;left:-458.7px;width:600px;text-align:right;-webkit-text-stroke:0.15px #333;">40M</div><div style="position:absolute;top:499.28px;font-size:10.3px;line-height:10.3px;color:#333;font-weight:normal;white-space:nowrap;left:-458.7px;width:600px;text-align:right;-webkit-text-stroke:0.15px #333;">20M</div><div style="position:absolute;top:538.18px;font-size:10.3px;line-height:10.3px;color:#333;font-weight:normal;white-space:nowrap;left:-458.7px;width:600px;text-align:right;-webkit-text-stroke:0.15px #333;">0</div><div style="position:absolute;top:554.92px;font-size:9.9px;line-height:9.9px;color:#333;font-weight:normal;white-space:nowrap;left:-133.5px;width:600px;text-align:center;-webkit-text-stroke:0.15px #333;">Jan 2023</div><div style="position:absolute;top:554.92px;font-size:9.9px;line-height:9.9px;color:#333;font-weight:normal;white-space:nowrap;left:-70.5px;width:600px;text-align:center;-webkit-text-stroke:0.15px #333;">Apr 2023</div><div style="position:absolute;top:554.92px;font-size:9.9px;line-height:9.9px;color:#333;font-weight:normal;white-space:nowrap;left:-6.600000000000023px;width:600px;text-align:center;-webkit-text-stroke:0.15px #333;">Jul 2023</div><div style="position:absolute;top:554.92px;font-size:9.9px;line-height:9.9px;color:#333;font-weight:normal;white-space:nowrap;left:57.60000000000002px;width:600px;text-align:center;-webkit-text-stroke:0.15px #333;">Oct 2023</div><div style="position:absolute;top:554.92px;font-size:9.9px;line-height:9.9px;color:#333;font-weight:normal;white-space:nowrap;left:121.89999999999998px;width:600px;text-align:center;-webkit-text-stroke:0.15px #333;">Jan 2024</div><div style="position:absolute;top:554.92px;font-size:9.9px;line-height:9.9px;color:#333;font-weight:normal;white-space:nowrap;left:185.7px;width:600px;text-align:center;-webkit-text-stroke:0.15px #333;">Apr 2024</div><div style="position:absolute;top:418.14px;font-size:9.4px;line-height:9.4px;color:#555;font-weight:normal;white-space:nowrap;left:417.9px;">Trend Line:</div><div style="position:absolute;top:418.23px;font-size:9.3px;line-height:9.3px;color:#555;font-weight:normal;white-space:nowrap;left:486.4px;">Won Amount</div><svg style="position:absolute;left:228.3px;top:573.6px;" width="11.5" height="12" viewBox="0 0 11.5 12"><rect x="0" y="0" width="11.5" height="12" rx="1" fill="#86a4ea"/><path d="M3.5 6.6 L5.2 8.6 L8.2 3.6" fill="none" stroke="#fff" stroke-width="1.1"/></svg><div style="position:absolute;top:574.00px;font-size:10.4px;line-height:10.4px;color:#333;font-weight:normal;white-space:nowrap;left:242.8px;-webkit-text-stroke:0.15px #333;">Won Amount</div><svg style="position:absolute;left:309.6px;top:573.6px;" width="11.5" height="12" viewBox="0 0 11.5 12"><rect x="0" y="0" width="11.5" height="12" rx="1" fill="#dcb5ea"/><path d="M3.5 6.6 L5.2 8.6 L8.2 3.6" fill="none" stroke="#fff" stroke-width="1.1"/></svg><div style="position:absolute;top:574.08px;font-size:10.3px;line-height:10.3px;color:#333;font-weight:normal;white-space:nowrap;left:323.9px;-webkit-text-stroke:0.15px #333;">Forecasted Won Amount</div><div style="position:absolute;top:433.78px;font-size:10.3px;line-height:10.3px;color:#333;font-weight:normal;white-space:nowrap;left:1.5px;width:600px;text-align:right;-webkit-text-stroke:0.15px #333;">70</div><div style="position:absolute;top:468.88px;font-size:10.3px;line-height:10.3px;color:#333;font-weight:normal;white-space:nowrap;left:1.5px;width:600px;text-align:right;-webkit-text-stroke:0.15px #333;">50</div><div style="position:absolute;top:503.18px;font-size:10.3px;line-height:10.3px;color:#333;font-weight:normal;white-space:nowrap;left:1.5px;width:600px;text-align:right;-webkit-text-stroke:0.15px #333;">30</div><div style="position:absolute;top:537.58px;font-size:10.3px;line-height:10.3px;color:#333;font-weight:normal;white-space:nowrap;left:1.5px;width:600px;text-align:right;-webkit-text-stroke:0.15px #333;">10</div><div style="position:absolute;top:554.02px;font-size:9.9px;line-height:9.9px;color:#333;font-weight:normal;white-space:nowrap;left:328.79999999999995px;width:600px;text-align:center;-webkit-text-stroke:0.15px #333;">Mar 2021</div><div style="position:absolute;top:554.02px;font-size:9.9px;line-height:9.9px;color:#333;font-weight:normal;white-space:nowrap;left:378.9px;width:600px;text-align:center;-webkit-text-stroke:0.15px #333;">Sep 2021</div><div style="position:absolute;top:554.02px;font-size:9.9px;line-height:9.9px;color:#333;font-weight:normal;white-space:nowrap;left:430.4px;width:600px;text-align:center;-webkit-text-stroke:0.15px #333;">Mar 2022</div><div style="position:absolute;top:554.02px;font-size:9.9px;line-height:9.9px;color:#333;font-weight:normal;white-space:nowrap;left:481.5px;width:600px;text-align:center;-webkit-text-stroke:0.15px #333;">Sep 2022</div><div style="position:absolute;top:554.02px;font-size:9.9px;line-height:9.9px;color:#333;font-weight:normal;white-space:nowrap;left:532.5px;width:600px;text-align:center;-webkit-text-stroke:0.15px #333;">Mar 2023</div><div style="position:absolute;top:554.02px;font-size:9.9px;line-height:9.9px;color:#333;font-weight:normal;white-space:nowrap;left:583.3px;width:600px;text-align:center;-webkit-text-stroke:0.15px #333;">Sep 2023</div><div style="position:absolute;top:419.45px;font-size:10.1px;line-height:10.1px;color:#333;font-weight:normal;white-space:nowrap;left:952.6px;-webkit-text-stroke:0.15px #333;">80%</div><div style="position:absolute;top:481.25px;font-size:10.1px;line-height:10.1px;color:#333;font-weight:normal;white-space:nowrap;left:952.6px;-webkit-text-stroke:0.15px #333;">40%</div><div style="position:absolute;top:543.65px;font-size:10.1px;line-height:10.1px;color:#333;font-weight:normal;white-space:nowrap;left:952.6px;-webkit-text-stroke:0.15px #333;">0%</div><div style="position:absolute;left:475.8px;top:477px;width:200px;height:12px;text-align:center;font-size:10.3px;line-height:12px;color:#333;transform:rotate(-90deg);white-space:nowrap;">Deals</div><div style="position:absolute;left:886px;top:477.5px;width:200px;height:12px;text-align:center;font-size:10px;line-height:12px;color:#333;transform:rotate(90deg);white-space:nowrap;">Win Rate %</div><svg style="position:absolute;left:727.3px;top:573px;" width="11.5" height="12" viewBox="0 0 11.5 12"><rect x="0" y="0" width="11.5" height="12" rx="1" fill="#bba4e2"/><path d="M3.5 6.6 L5.2 8.6 L8.2 3.6" fill="none" stroke="#fff" stroke-width="1.1"/></svg><div style="position:absolute;top:573.60px;font-size:9.8px;line-height:9.8px;color:#333;font-weight:normal;white-space:nowrap;left:741.9px;-webkit-text-stroke:0.15px #333;">Deals</div><svg style="position:absolute;left:773px;top:573px;" width="11.5" height="12" viewBox="0 0 11.5 12"><rect x="0" y="0" width="11.5" height="12" rx="1" fill="#abdc8f"/><path d="M3.5 6.6 L5.2 8.6 L8.2 3.6" fill="none" stroke="#fff" stroke-width="1.1"/></svg><div style="position:absolute;top:573.86px;font-size:9.5px;line-height:9.5px;color:#333;font-weight:normal;white-space:nowrap;left:787.5px;-webkit-text-stroke:0.15px #333;">Win Rate %</div><svg style="position:absolute;left:105px;top:304px;" width="22" height="30" viewBox="0 0 22 30"><path d="M4.8 4.0 L4.8 20.5 L8.8 17.2 L12.4 25.6 L15.4 24.3 L11.8 16.2 L17.6 16.0 Z" fill="#fff" stroke="#fff" stroke-width="2" stroke-linejoin="round"/><path d="M4.8 4.0 L4.8 20.5 L8.8 17.2 L12.4 25.6 L15.4 24.3 L11.8 16.2 L17.6 16.0 Z" fill="#000"/></svg><div style="position:absolute;left:0px;top:585.5px;width:1024px;height:1.5px;background:#3a3a3a;"></div></body></html>
